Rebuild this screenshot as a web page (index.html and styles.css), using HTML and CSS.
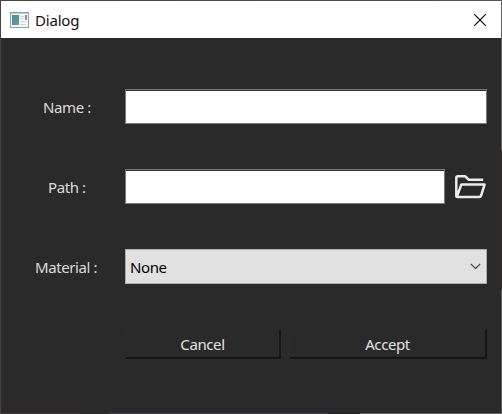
FILE: index.html
```
<!DOCTYPE html>
<html lang="en">
<head>
<meta charset="utf-8">
<title>Dialog</title>
<link rel="stylesheet" href="styles.css">
</head>
<body>
<main class="window">
  <header class="titlebar">
    <svg class="app-icon" width="19" height="16" viewBox="0 0 19 16">
      <defs><linearGradient id="pane" x1="0" y1="0" x2="1" y2="1"><stop offset="0" stop-color="#4b86a0"/><stop offset="1" stop-color="#5fa98b"/></linearGradient></defs>
      <rect x=".5" y=".5" width="18" height="15" fill="#f4f6f8" stroke="#929baa"/>
      <path d="M1 1.500h17" stroke="#c6ced8"/>
      <rect x="2" y="3" width="7" height="10" fill="url(#pane)"/>
      <path d="M10.500 4.500h4M10.500 6.500h3M10.500 9.500h5M10.500 12.500h5" stroke="#cdd2d8"/>
      <path d="M16 3v5" stroke="#54758c" stroke-width="1.500"/>
    </svg>
    <h1 class="title">Dialog</h1>
    <button class="close" aria-label="Close"><svg width="12" height="12" viewBox="0 0 12 12"><path d="M.3.3l11.400 11.400M11.700.3L.3 11.700" stroke="#000" stroke-width="1.150"/></svg></button>
  </header>
  <form class="form">
    <label class="label name" for="name">Name :</label>
    <input class="field" id="name" type="text">
    <label class="label path" for="path">Path :</label>
    <div class="path-row">
      <input class="field" id="path" type="text">
      <button class="browse" type="button" aria-label="Browse"><svg width="33" height="26" viewBox="0 0 33 26"><path d="M3.300 22V3.800Q3.300 2.300 4.800 2.300H12.300L15.600 5.700H30.200M3.800 22.900L8.300 10.600H31.600L28 21.800Q27.600 22.900 26.400 22.900H4.300Q3.300 22.900 3.300 21.900" fill="none" stroke="#ececec" stroke-width="2.500" stroke-linejoin="round"/></svg></button>
    </div>
    <span class="label material">Material :</span>
    <div class="select"><span>None</span><svg width="11" height="7" viewBox="0 0 11 7"><path d="M.8.9l4.700 4.600L10.200.9" fill="none" stroke="#444" stroke-width="1.200"/></svg></div>
    <div class="actions">
      <button class="button cancel" type="button">Cancel</button>
      <button class="button accept" type="button">Accept</button>
    </div>
  </form>
</main>
</body>
</html>
```
FILE: styles.css
```
* { box-sizing: border-box; }
body {
  margin: 0;
  font: 15px/20px "Noto Sans", sans-serif;
  letter-spacing: -.4px;
}
button { font: inherit; letter-spacing: inherit; }
.window {
  width: 502px;
  height: 414px;
  padding: 1px;
  background:
    linear-gradient(90deg, #40383a 80px, #292929 80px 109px, #41405c 109px 328px, #222 328px 360px, #666 360px) 0 100% / 100% 1px no-repeat,
    linear-gradient(#626262 150px, #302b2b 150px 290px, #5c5c5c 290px) 100% 0 / 1px 100% no-repeat,
    linear-gradient(90deg, #444, #555) 0 0 / 100% 1px no-repeat,
    #434343;
}
.titlebar {
  display: flex;
  align-items: center;
  height: 37px;
  padding: 0 15px 0 9px;
  background: #fff;
}
.title {
  flex: 1;
  margin: 0 0 0 6px;
  font: inherit;
  letter-spacing: -.2px;
  color: #111;
}
.close, .browse {
  display: flex;
  padding: 0;
  border: 0;
  background: none;
}
.form {
  display: grid;
  grid-template-columns: 124px 362px;
  grid-template-rows: 35px 35px 35px 31px;
  row-gap: 45px;
  height: 375px;
  padding-top: 51px;
  background: #2a2a2a;
}
.label {
  align-self: center;
  padding: 1px 6px 0 34px;
  color: #dcdcdc;
}
.name { padding-left: 42px; }
.path { padding-left: 47px; }
.field {
  width: 100%;
  min-width: 0;
  height: 35px;
  padding: 4px;
  border: 1px solid #7a7a7a;
  border-radius: 0;
  background: #fff;
  box-shadow: inset 0 1px #303030;
}
.path-row { display: flex; }
.path-row .field { width: 320px; }
.browse { align-self: center; margin-left: 8px; }
.select {
  display: flex;
  align-items: center;
  justify-content: space-between;
  padding: 0 5px 0 4px;
  border: 1px solid #adadad;
  background: #e1e1e1;
  color: #000;
}
.actions {
  grid-column: 2;
  display: flex;
  gap: 8px;
}
.button {
  height: 30px;
  padding: 1px 0 0;
  border: solid;
  border-width: 1px 2px 2px 1px;
  border-color: #2d2d2d #151515 #151515 #2d2d2d;
  background: #2a2a2a;
  color: #e2e2e2;
}
.cancel { width: 156px; }
.accept { width: 198px; }
```
